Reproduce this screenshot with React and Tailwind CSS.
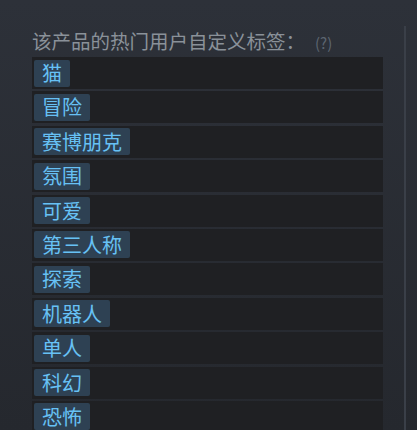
import React from 'react';

const tags = ['猫', '冒险', '赛博朋克', '氛围', '可爱', '第三人称', '探索', '机器人', '单人', '科幻', '恐怖'];

export default function App() {
  return (
    <div
      className="flex w-[417px] h-[430px] overflow-hidden bg-gradient-to-b from-[#2d3139] to-[#25282e]"
      style={{ fontFamily: '"Noto Sans CJK SC", "Noto Sans", sans-serif' }}
    >
      <div className="w-[383px] shrink-0 pl-8 pt-[29px]">
        <div className="flex items-center h-[24px] mb-[4px]">
          <span className="text-[19.5px] leading-none text-[#8a9199]">该产品的热门用户自定义标签：</span>
          <span className="ml-[10px] text-[15px] leading-none text-[#5c6570] mt-[3px]">(?)</span>
        </div>
        <div className="flex flex-col gap-[2.4px]">
          {tags.map((tag) => (
            <div key={tag} className="h-[32px] shrink-0 flex items-center pl-[2px] bg-[#1f2023]">
              <span className="h-[27px] flex items-center px-[8px] rounded-[2px] bg-[#2e4153] text-[20px] leading-none text-[#67c1f5]">
                {tag}
              </span>
            </div>
          ))}
        </div>
      </div>
      <div className="w-[2px] ml-[21px] mt-[26px] self-stretch bg-[#3a3f48]" />
    </div>
  );
}
